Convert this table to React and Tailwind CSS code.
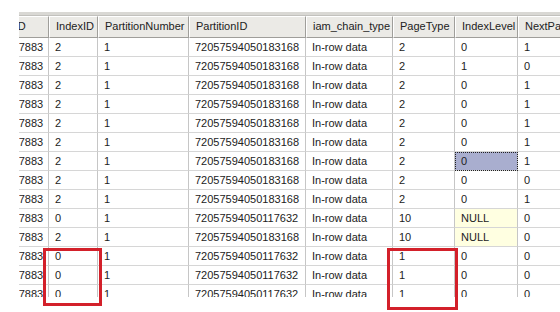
import React from 'react';

const COLS = ['ObjectID', 'IndexID', 'PartitionNumber', 'PartitionID', 'iam_chain_type', 'PageType', 'IndexLevel', 'NextPageFID'];

const A = '72057594050183168';
const B = '72057594050117632';

// [objectId, indexId, partNo, partitionId, chain, pageType, indexLevel, next]
const rows = [
    ['1977057883', '2', '1', A, 'In-row data', '2', '0', '1'],
    ['1977057883', '2', '1', A, 'In-row data', '2', '1', '0'],
    ['1977057883', '2', '1', A, 'In-row data', '2', '0', '1'],
    ['1977057883', '2', '1', A, 'In-row data', '2', '0', '1'],
    ['1977057883', '2', '1', A, 'In-row data', '2', '0', '1'],
    ['1977057883', '2', '1', A, 'In-row data', '2', '0', '1'],
    ['1977057883', '2', '1', A, 'In-row data', '2', '0', '1'],
    ['1977057883', '2', '1', A, 'In-row data', '2', '0', '0'],
    ['1977057883', '2', '1', A, 'In-row data', '2', '0', '1'],
    ['1977057883', '0', '1', B, 'In-row data', '10', 'NULL', '0'],
    ['1977057883', '2', '1', A, 'In-row data', '10', 'NULL', '0'],
    ['1977057883', '0', '1', B, 'In-row data', '1', '0', '0'],
    ['1977057883', '0', '1', B, 'In-row data', '1', '0', '0'],
    ['1977057883', '0', '1', B, 'In-row data', '1', '0', '0'],
];

const SELECTED = { row: 6, col: 6 };

export default function App() {
    return (
        <div className="relative w-[560px] h-[312px] bg-white overflow-hidden font-['Liberation_Sans',Arial,sans-serif] text-[11px] text-[#222]">
            {/* result grid, scrolled a little to the right */}
            <div className="ml-[19px] mt-[12px] h-[285px] overflow-hidden">
                <div className="h-[4px] bg-[#d9d8d4] border-b border-[#c2c1bd]" />
                <div className="-ml-[43px] grid grid-cols-[73px_49px_91px_117px_87px_62px_63px_120px]">
                    {COLS.map(c => (
                        <div
                            key={c}
                            className="h-[22px] leading-[19px] pl-[6px] whitespace-nowrap overflow-hidden bg-[#ebeae6] border-t border-l border-t-white border-l-white border-r border-b border-r-[#9f9e9a] border-b-[#9f9e9a]"
                        >
                            {c}
                        </div>
                    ))}
                    {rows.map((r, ri) =>
                        r.map((v, ci) => {
                            const isNull = v === 'NULL';
                            const isSel = ri === SELECTED.row && ci === SELECTED.col;
                            return (
                                <div
                                    key={ri + '-' + ci}
                                    className={
                                        'h-[19px] leading-[18px] pl-[6px] whitespace-nowrap overflow-hidden border-r border-b border-r-[#c6c6c6] border-b-[#d6d6d6] ' +
                                        (isSel
                                            ? 'bg-[#a9aecf] outline-1 outline-dotted outline-[#222] -outline-offset-1'
                                            : isNull
                                            ? 'bg-[#ffffe1]'
                                            : 'bg-white')
                                    }
                                >
                                    {v}
                                </div>
                            );
                        })
                    )}
                </div>
            </div>

            {/* red highlight boxes drawn over the grid */}
            <div className="absolute left-[43px] top-[248px] w-[59px] h-[58px] border-[3px] border-[#d3202a]" />
            <div className="absolute left-[387px] top-[248px] w-[71px] h-[62px] border-[3px] border-[#d3202a]" />
        </div>
    );
}
